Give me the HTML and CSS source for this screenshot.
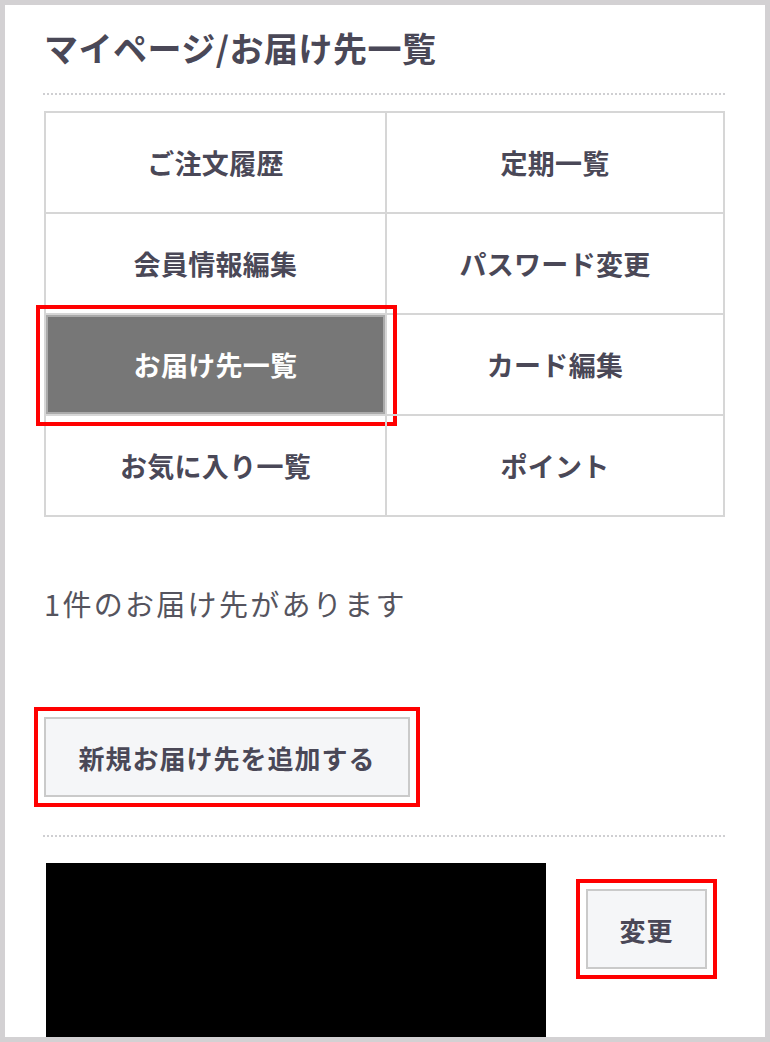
FILE: index.html
```html
<!DOCTYPE html>
<html lang="ja">
<head>
    <meta charset="UTF-8">
    <meta name="viewport" content="width=device-width, initial-scale=1.0">
    <title>マイページ/お届け先一覧</title>
    <link rel="stylesheet" href="styles.css">
</head>
<body>
    <div class="page">
        <h1 class="title">マイページ/お届け先一覧</h1>
        <hr class="dots">

        <div class="menu">
            <a class="menu-item" href="#">ご注文履歴</a>
            <a class="menu-item" href="#">定期一覧</a>
            <a class="menu-item" href="#">会員情報編集</a>
            <a class="menu-item" href="#">パスワード変更</a>
            <a class="menu-item active" href="#">お届け先一覧</a>
            <a class="menu-item" href="#">カード編集</a>
            <a class="menu-item" href="#">お気に入り一覧</a>
            <a class="menu-item" href="#">ポイント</a>
        </div>

        <p class="count">1件のお届け先があります</p>

        <button class="btn btn-add marked">新規お届け先を追加する</button>

        <hr class="dots dots-list">

        <div class="address">
            <div class="address-body"></div>
            <button class="btn btn-edit marked">変更</button>
        </div>
    </div>
</body>
</html>
```

FILE: styles.css
```css
body {
    margin: 0;
    padding: 5px;
    background-color: #d3d1d3;
    font-family: "Noto Sans CJK JP", "Noto Sans", sans-serif;
    color: #4a4857;
}
.page {
    background: #fff;
    height: 1032px;
    overflow: hidden;
    padding: 0 40px 0 39px;
    box-sizing: border-box;
}
.title {
    margin: 0;
    padding-top: 22px;
    font-size: 34px;
    line-height: 42px;
    font-weight: bold;
    letter-spacing: 0.5px;
}
.dots {
    border: none;
    border-top: 2px dotted #cfcfd2;
    margin: 24px 0 0 -1px;
    height: 0;
}
.menu {
    margin-top: 16px;
    display: grid;
    grid-template-columns: 341px 1fr;
    border-top: 2px solid #d6d6d6;
    border-left: 2px solid #d6d6d6;
}
.menu-item {
    height: 99px;
    display: flex;
    align-items: center;
    justify-content: center;
    border-right: 2px solid #d6d6d6;
    border-bottom: 2px solid #d6d6d6;
    color: #4a4857;
    text-decoration: none;
    font-size: 27px;
    font-weight: bold;
    letter-spacing: 0.3px;
}
.menu-item.active {
    background: #777;
    color: #fff;
    box-shadow: inset 0 0 0 2px #aaa;
    outline: 4px solid #ff0000;
    outline-offset: 6px;
}
.count {
    margin: 66px 0 0;
    font-size: 29px;
    line-height: 40px;
    letter-spacing: 2.3px;
    color: #55545e;
}
.btn {
    font-family: inherit;
    font-weight: bold;
    font-size: 26px;
    color: #4a4857;
    background: #f5f6f8;
    border: 2px solid #cacaca;
    border-radius: 0;
    letter-spacing: 1px;
    padding: 0;
}
.marked {
    outline: 4px solid #ff0000;
    outline-offset: 6px;
}
.btn-add {
    display: block;
    width: 366px;
    height: 80px;
    margin-top: 94px;
}
.dots-list {
    margin-top: 38px;
}
.address {
    display: flex;
    align-items: flex-start;
    margin-top: 26px;
    padding-left: 2px;
}
.address-body {
    width: 500px;
    height: 200px;
    background: #000;
}
.btn-edit {
    width: 121px;
    height: 80px;
    margin: 26px 0 0 40px;
}
```
